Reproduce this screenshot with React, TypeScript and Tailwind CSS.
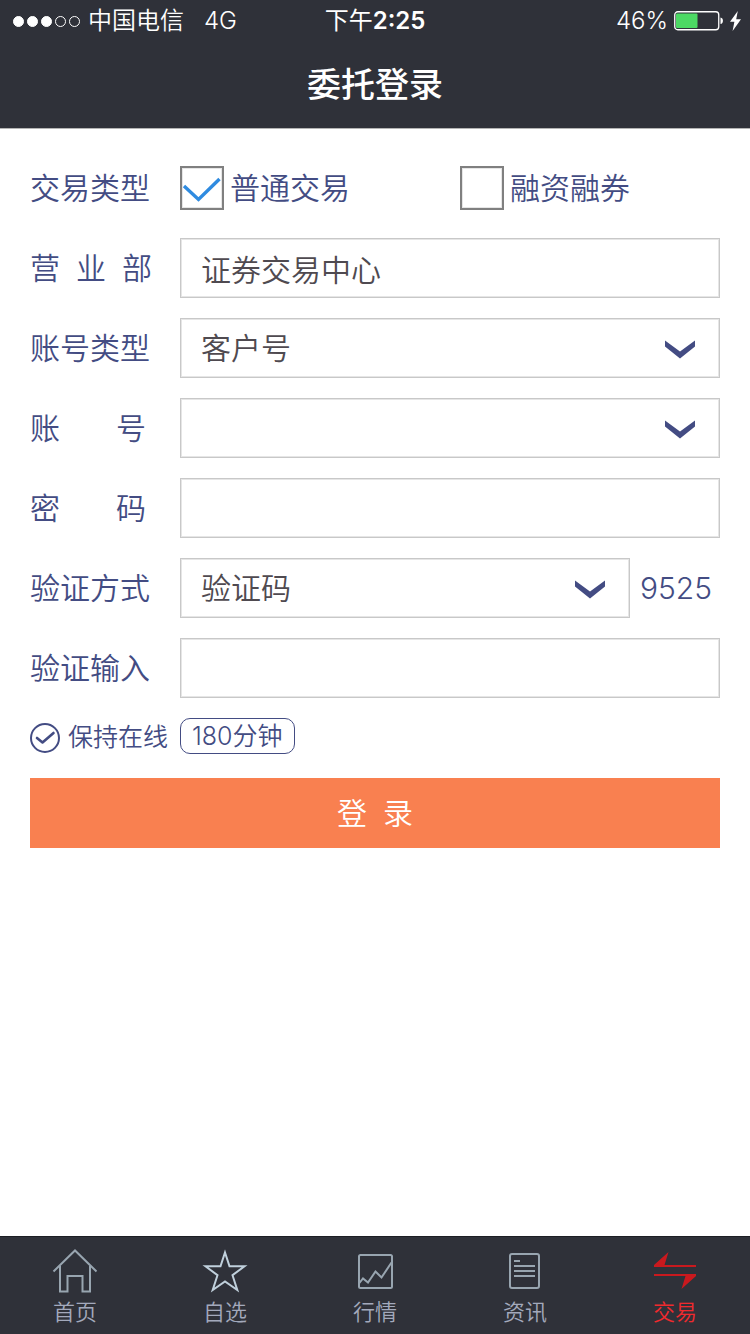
import { useState } from 'react'
import type { ReactNode } from 'react'
import clsx from 'clsx'

const fieldClass =
  'block h-[60px] w-full appearance-none rounded-none border border-[#c8c8c8] bg-white px-5 text-[#4f4a50] shadow-[inset_0_0_0_1px_#e6e6e6] outline-none'

const StatusBar = () => (
  <div className="grid h-[42px] grid-cols-3 items-center text-2xl">
    <div className="flex items-center gap-2 pl-[13px] font-[350] whitespace-nowrap">
      <div className="flex gap-[3px]">
        {[true, true, true, false, false].map((filled, i) => (
          <span key={i} className={clsx('size-[11px] rounded-full border border-white', filled && 'bg-white')} />
        ))}
      </div>
      <span>中国电信</span>
      <span className="pl-3">4G</span>
    </div>
    <div className="text-center">
      下午<span className="font-semibold">2:25</span>
    </div>
    <div className="flex items-center justify-end gap-[6px] pr-[9px] font-[350]">
      <span>46%</span>
      <svg className="h-5 w-[50px]" viewBox="0 0 50 20" fill="none">
        <rect x="0.75" y="0.75" width="44" height="18" rx="3" stroke="#fff" strokeWidth="1.3" />
        <rect x="2" y="2.5" width="21.5" height="14.5" rx="1" fill="#4cd964" />
        <path d="M46.5 6.5c1.6.3 2.4 1.5 2.4 3.3s-.8 3-2.4 3.3z" fill="#fff" />
      </svg>
      <svg className="h-5 w-[11px]" viewBox="0 0 11 20" fill="#fff">
        <path d="M7.8 0 0 10.800h4.400L2.600 20 11 8.300H6.200z" />
      </svg>
    </div>
  </div>
)

const Row = ({ parts, wide, htmlFor, children }: { parts: string[]; wide?: boolean; htmlFor?: string; children: ReactNode }) => (
  <div className="flex h-[60px] items-center">
    <label htmlFor={htmlFor} className={clsx('flex w-[150px] shrink-0', wide ? 'gap-14' : 'gap-4')}>
      {parts.map((part) => (
        <span key={part}>{part}</span>
      ))}
    </label>
    {children}
  </div>
)

const Chevron = () => (
  <svg className="pointer-events-none absolute top-[22px] right-6 h-5 w-8" viewBox="0 0 32 20" fill="#434c83">
    <path d="M1 0.5 16 11.5 31 0.5V6.5L16 18.5 1 6.5z" />
  </svg>
)

const SelectField = ({ id, options }: { id: string; options: string[] }) => (
  <div className="relative min-w-0 flex-1">
    <select id={id} className={fieldClass}>
      {options.map((option) => (
        <option key={option}>{option}</option>
      ))}
    </select>
    <Chevron />
  </div>
)

const TradeCheckbox = ({ label, defaultChecked }: { label: string; defaultChecked?: boolean }) => (
  <label className="flex flex-1 items-center gap-[6px]">
    <span className="relative size-11">
      <input
        type="checkbox"
        defaultChecked={defaultChecked}
        className="peer block size-11 appearance-none border-2 border-[#808080] bg-white shadow-[inset_0_0_0_1px_#e6e6e6]"
      />
      <svg className="pointer-events-none absolute inset-0 hidden size-11 peer-checked:block" viewBox="0 0 44 44" fill="none">
        <path d="M4 20 18.500 33.500 39.500 13" stroke="#2f8be0" strokeWidth="3.4" />
      </svg>
    </span>
    {label}
  </label>
)

const tabs = [
  {
    name: '首页',
    icon: (
      <g stroke="#98a5b0" strokeWidth="2">
        <path d="M1.5 23.5 23 2.5 44.5 23.5" />
        <path d="M8 18V43.5H15.5V28H30.5V43.5H38V18" />
      </g>
    )
  },
  {
    name: '自选',
    icon: (
      <path
        d="M23 4.500 27.500 18.300H42.500L30.500 27.200 35.300 42 23 33.400 10.700 42 15.500 27.200 3.500 18.300H18.500z"
        stroke="#c0d0dc"
        strokeWidth="2"
      />
    )
  },
  {
    name: '行情',
    icon: (
      <g stroke="#98a5b0" strokeWidth="2">
        <rect x="7" y="7" width="33" height="33" rx="1.5" />
        <path d="M7 35.5 11 30.5 16 34.5 23.5 23.5 29.5 29.5 39.5 14.5" />
      </g>
    )
  },
  {
    name: '资讯',
    icon: (
      <g stroke="#98a5b0" strokeWidth="2">
        <rect x="8" y="6" width="29" height="34" rx="2" />
        <path d="M12 13H18M12 18H33M12 23H33M12 28H33" />
      </g>
    )
  },
  {
    name: '交易',
    active: true,
    icon: (
      <g fill="#c9191e">
        <path d="M2 17 16.5 4 12.5 17H44V19H2z" />
        <path d="M2 26H44V28L29.500 41 33.500 28H2z" />
      </g>
    )
  }
]

const App = () => {
  const [account, setAccount] = useState('')

  return (
    <div className="flex min-h-screen flex-col bg-white font-['Inter','Noto_Sans_CJK_SC',sans-serif]">
      <header className="border-b border-[#b4b4b4] bg-[#2f3139] text-white">
        <StatusBar />
        <h1 className="text-center text-[34px] leading-[86px] font-medium">委托登录</h1>
      </header>

      <form className="flex-1 px-[30px] pt-[29px] text-[30px] font-[350] text-[#434c83]" onSubmit={(e) => e.preventDefault()}>
        <div className="flex flex-col gap-5">
          <Row parts={['交易类型']}>
            <div className="flex flex-1 gap-5">
              <TradeCheckbox label="普通交易" defaultChecked />
              <TradeCheckbox label="融资融券" />
            </div>
          </Row>
          <Row parts={['营', '业', '部']} htmlFor="branch">
            <input id="branch" className={fieldClass} defaultValue="证券交易中心" />
          </Row>
          <Row parts={['账号类型']} htmlFor="account-type">
            <SelectField id="account-type" options={['客户号']} />
          </Row>
          <Row parts={['账', '号']} wide htmlFor="account">
            <div className="relative min-w-0 flex-1">
              <input id="account" className={fieldClass} value={account} onChange={(e) => setAccount(e.target.value)} />
              <Chevron />
            </div>
          </Row>
          <Row parts={['密', '码']} wide htmlFor="password">
            <input id="password" type="password" className={fieldClass} />
          </Row>
          <Row parts={['验证方式']} htmlFor="verify-type">
            <SelectField id="verify-type" options={['验证码']} />
            <span className="w-[90px] pl-[10px]">9525</span>
          </Row>
          <Row parts={['验证输入']} htmlFor="verify-code">
            <input id="verify-code" className={fieldClass} />
          </Row>
        </div>

        <div className="mt-5 flex items-start text-[25px]">
          <label className="flex h-10 w-[150px] items-center gap-2 whitespace-nowrap">
            <span className="relative size-[30px] shrink-0">
              <input type="checkbox" defaultChecked className="peer block size-[30px] appearance-none rounded-full border-2 border-[#434c83]" />
              <svg className="pointer-events-none absolute inset-0 hidden size-[30px] peer-checked:block" viewBox="0 0 30 30" fill="none">
                <path d="M7 15 12.5 19.5 23.5 10" stroke="#434c83" strokeWidth="2.6" strokeLinecap="round" strokeLinejoin="round" />
              </svg>
            </span>
            保持在线
          </label>
          <button type="button" className="h-9 rounded-[10px] border border-[#434c83] px-[11px] leading-8">
            180分钟
          </button>
        </div>

        <button type="submit" className="mt-5 flex h-[70px] w-full items-center justify-center gap-4 bg-[#f98050] text-white">
          <span>登</span>
          <span>录</span>
        </button>
      </form>

      <nav className="grid h-[98px] grid-cols-5 border-t border-[#1d1e24] bg-[#2f3139] text-[22px] font-[350]">
        {tabs.map((tab) => (
          <a key={tab.name} href="#" className={clsx('flex flex-col items-center pt-[11px]', tab.active ? 'text-[#f02a2e]' : 'text-[#a3a9bc]')}>
            <svg className="size-[46px]" viewBox="0 0 46 46" fill="none">
              {tab.icon}
            </svg>
            <span className="leading-9">{tab.name}</span>
          </a>
        ))}
      </nav>
    </div>
  )
}

export default App
